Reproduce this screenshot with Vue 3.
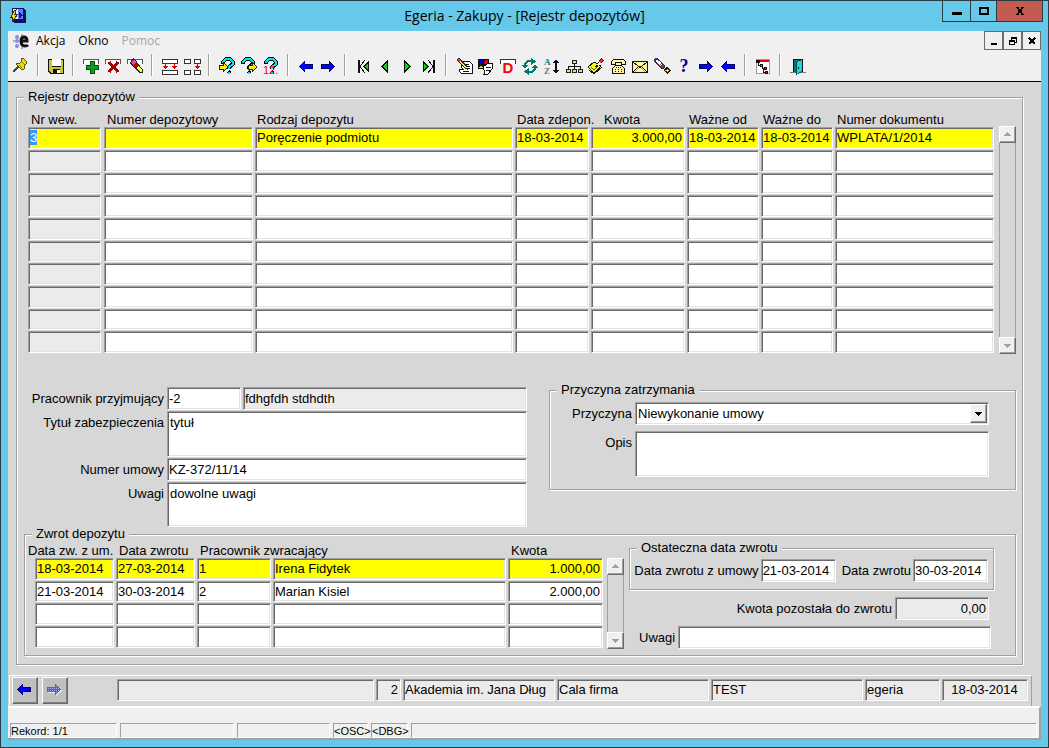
<script setup>
import { ref, onMounted } from 'vue'

const qMark = (x) =>
  `<g transform="translate(${x} 0)" fill="none" stroke-linejoin="round"><path d="M1 7V5L4 2H8L11 5V7L7 10V12" stroke="#000" stroke-width="4"/><path d="M7 13L9 15L7 18L5 15Z" fill="#000"/><path d="M1 6V5L4 2H8L11 5V7L7 10V12" stroke="#00e5f0" stroke-width="2"/><path d="M6 15H8V17H6Z" fill="#00e5f0"/></g>`
const flag = '<path d="M1.500 6.500V2.500H16.500V6.500" fill="#fff" stroke="#555"/>'
const arrowLeft = '<path d="M2 9.500L8 3V7H16V12H8V16Z" fill="#000060"/><path d="M3 9.500L8 5V8H15V11H8V14Z" fill="#0000ff"/>'
const arrowRight = '<path d="M16 9.500L10 3V7H2V12H10V16Z" fill="#000060"/><path d="M15 9.500L10 5V8H3V11H10V14Z" fill="#0000ff"/>'

const art = {
  pin: '<path d="M1 15L7 9" stroke="#444" stroke-width="2"/><path d="M9 2L11 1L15 5L14 7L12 9V12L10 13L4 7L5 6H8L10 4Z" fill="#e3dc1c" stroke="#5c5800"/><path d="M10 5L13 8M7 8L10 11" stroke="#8c8600"/>',
  save: '<path d="M1 2H17V17H3L1 15Z" fill="#111"/><path d="M2 3H5V10H14V3H16V16H13V12H6V16H4L2 14Z" fill="#c9c432"/><rect x="5" y="2" width="9" height="7" fill="#fff"/><rect x="10" y="13" width="3" height="3" fill="#fff"/>',
  add: flag + '<path d="M8 4H12V8H16V12H12V16H8V12H4V8H8Z" fill="#0a9d1c" stroke="#064d0c" stroke-width="1"/>',
  remove: flag + '<path d="M5 5L14 15M14 5L5 15" stroke="#a30000" stroke-width="3" fill="none"/>',
  erase: flag + '<path d="M5 3L8 1L17 13V16H14L4 7Z" fill="#222"/><path d="M6 4L8 3L10 5L7 8L5 6Z" fill="#f040b0"/><path d="M7 8L10 5L12 8L9 11Z" fill="#c00000"/><path d="M10 11L13 9L16 13V15H14Z" fill="#ffff30"/>',
  rows: '<path d="M1.500 2.500H16.500V6.500H1.500ZM1.500 13.500H16.500V17H1.500Z" fill="#fff" stroke="#333"/><path d="M4.500 6V10M13.500 6V10" stroke="#e00000"/><path d="M2 9H7L4.500 12ZM11 9H16L13.500 12Z" fill="#e00000"/>',
  cells: '<path d="M1.500 2.500H7.500V6.500H1.500ZM11.500 2.500H17V6.500H11.500ZM1.500 13.500H7.500V17H1.500ZM11.500 13.500H17V17H11.500Z" fill="#fff" stroke="#333"/><path d="M14.500 6V10" stroke="#e00000"/><path d="M12 9H17L14.500 12Z" fill="#e00000"/>',
  queryIn: qMark(4) + '<path d="M1 8H5V5L10 10L5 15V12H1Z" fill="#ffef00" stroke="#222"/>',
  queryOut: qMark(2) + '<path d="M8 8H12V5L17 10L12 15V12H8Z" fill="#ffef00" stroke="#222"/>',
  queryCount: qMark(3) + '<text x="1" y="17" font-family="Liberation Sans" font-size="11" fill="#ff0000">12.</text>',
  left: arrowLeft,
  right: arrowRight,
  first: '<path d="M4 3H6V16H4Z" fill="#111"/><path d="M11 3L6 9.500L11 16" stroke="#111" fill="none"/><path d="M15 3V16L9 9.500Z" fill="#111"/><path d="M14 6V13L11 9.500Z" fill="#00e000"/>',
  prev: '<path d="M12 3V16L5 9.500Z" fill="#111"/><path d="M11 6V13L7 9.500Z" fill="#00e000"/>',
  next: '<path d="M6 3V16L13 9.500Z" fill="#111"/><path d="M7 6V13L11 9.500Z" fill="#00e000"/>',
  last: '<path d="M13 3H15V16H13Z" fill="#111"/><path d="M8 3L13 9.500L8 16" stroke="#111" fill="none"/><path d="M3 3V16L9 9.500Z" fill="#111"/><path d="M4 6V13L7 9.500Z" fill="#00e000"/>',
  edit: '<path d="M6 4H14L17 7V16H6L4 14V12H8L6 10Z" fill="#fff" stroke="#111"/><path d="M10 7.500H14M12 9.500H15M12 11.500H15M8 14.500H14" stroke="#111"/><path d="M1 3L4 1L12 9L13 13L10 12Z" fill="#222"/><path d="M4 5L6 4L12 11H10Z" fill="#ffe92c"/><path d="M2 3L4 2L6 4L4 5Z" fill="#e0308c"/>',
  shapes: '<rect x="1" y="2" width="11" height="10" fill="#111"/><rect x="2" y="3" width="4" height="4" fill="#0000d8"/><circle cx="9" cy="5" r="2" fill="#e80000"/><path d="M2 11L4 8L6 11Z" fill="#e8d400"/><path d="M7 9L12 6H16L15 12L11 17H7L8 14L6 12Z" fill="#fff" stroke="#111"/><path d="M9 10.500H14M9 13.500H13" stroke="#111"/>',
  document: '<path d="M1.500 7V2.500H16.500V7" fill="#fff" stroke="#333"/><text x="9" y="16" font-family="Liberation Sans" font-weight="bold" font-size="15" fill="#ff0000" text-anchor="middle">D</text>',
  refresh: '<path d="M4 9V7L7 4H11M14 9V12L11 15H7" stroke="#007a6c" stroke-width="2" fill="none"/><path d="M10 1L15 4.500L10 8ZM8 18L3 14.500L8 11Z" fill="#007a6c"/><path d="M1 8H7L4 12ZM11 11H17L14 7Z" fill="#007a6c"/>',
  sort: '<text x="1" y="8" font-family="Liberation Serif" font-weight="bold" font-size="9" fill="#008080">A</text><text x="1" y="17" font-family="Liberation Serif" font-weight="bold" font-size="9" fill="#777">Z</text><path d="M13 4V15" stroke="#111" stroke-width="2"/><path d="M10 6L13 2L16 6ZM10 13L13 17L16 13Z" fill="#111"/>',
  hierarchy: '<path d="M9.500 6V12M3.500 12V9.500H15.500V12" stroke="#111" fill="none"/><path d="M7.500 3.500H11.500V6.500H7.500ZM1.500 12.500H5.500V15.500H1.500ZM7.500 12.500H11.500V15.500H7.500ZM13.500 12.500H17V15.500H13.500Z" fill="#e4dc80" stroke="#222"/>',
  approve: '<path d="M1 10L7 5L14 9L7 16Z" fill="#ffef2c" stroke="#111"/><path d="M2 13L7 17L15 10" stroke="#111" fill="none"/><path d="M4 10L7 13L11 9" stroke="#0a8a10" stroke-width="1" fill="none"/><path d="M8 10L14 1L17 3L10 11Z" fill="#222"/><path d="M10 8L12 5L14 6L11 9Z" fill="#fff"/><path d="M12 5L14 2L16 3L14 6Z" fill="#e03030"/>',
  phone: '<path d="M2.500 7.500V4.500L4.500 2.500H14.500L16.500 4.500V7.500H12.500V5.500H6.500V7.500Z" fill="#fff59a" stroke="#111"/><path d="M6.500 8.500H12.500L15.500 11.500V16.500H3.500V11.500Z" fill="#fff59a" stroke="#111"/><path d="M7 10.500H8M9 10.500H10M11 10.500H12M6 12.500H7M9 12.500H10M12 12.500H13M6 14.500H7M9 14.500H10M12 14.500H13" stroke="#111"/>',
  mail: '<rect x="1.500" y="4.500" width="15" height="11" fill="#fff6a0" stroke="#111"/><path d="M2 5L9 10.500L16 5M2 15L7 10M16 15L11 10" stroke="#111" fill="none"/><path d="M4 15L8 11M14 15L10 11" stroke="#d0b828"/>',
  torch: '<path d="M1 3L4 1L12 8V11L9 12L2 6Z" fill="#333"/><path d="M3 3L6 4L9 7L7 9L3 5Z" fill="#fff"/><path d="M8 9L10 7L11 9L9 11Z" fill="#2850d0"/><path d="M6 9L9 6" stroke="#e00000"/><path d="M1 3L4 1" stroke="#1030d0"/><path d="M14 10L18 13L14 17L10 13Z" fill="#111"/><path d="M14 12V15M12 13.500H16" stroke="#ffef2c"/>',
  help: '<text x="9" y="15" font-family="Liberation Serif" font-weight="bold" font-size="18" fill="#000090" text-anchor="middle">?</text>',
  tree: '<rect x="2.500" y="2.500" width="13" height="14" fill="#fff" stroke="#999"/><rect x="6" y="3" width="9" height="2" fill="#f00000"/><path d="M4.500 5V8.500H8M8.500 8V11.500H12M9.500 11V15.500H12" stroke="#111" fill="none"/><path d="M2 3H6V6H2ZM6 7H9V10H6ZM10 10H13V13H10ZM11 14H14V17H11Z" fill="#111"/><rect x="11" y="11" width="1" height="1" fill="#00c000"/><rect x="7" y="8" width="1" height="1" fill="#e8d400"/><rect x="12" y="15" width="1" height="1" fill="#e00000"/>',
  door: '<path d="M1 15.500H17" stroke="#777"/><path d="M4.500 15V2.500H13.500V15" fill="#0a6f78" stroke="#111"/><path d="M7 5L13 2V15L7 18Z" fill="#054a50"/><path d="M8 5L13 3V14L8 17Z" fill="#18d8e0"/><rect x="9" y="10" width="1" height="2" fill="#111"/>'
}

const toolGroups = [
  [['pin', 'Przypnij']],
  [['save', 'Zapisz']],
  [['add', 'Dodaj rekord'], ['remove', 'Usuń rekord'], ['erase', 'Wyczyść rekord']],
  [['rows', 'Powiel rekord'], ['cells', 'Powiel pole']],
  [['queryIn', 'Wprowadź zapytanie'], ['queryOut', 'Wykonaj zapytanie'], ['queryCount', 'Policz rekordy']],
  [['left', 'Poprzedni blok'], ['right', 'Następny blok']],
  [['first', 'Pierwszy rekord'], ['prev', 'Poprzedni rekord'], ['next', 'Następny rekord'], ['last', 'Ostatni rekord']],
  [
    ['edit', 'Edytuj'], ['shapes', 'Lista wartości'], ['document', 'Dokument'], ['refresh', 'Odśwież'],
    ['sort', 'Sortuj'], ['hierarchy', 'Struktura'], ['approve', 'Zatwierdź'], ['phone', 'Telefon'],
    ['mail', 'Poczta'], ['torch', 'Szukaj'], ['help', 'Pomoc'], ['right', 'Dalej'], ['left', 'Wstecz']
  ],
  [['tree', 'Drzewo']],
  [['door', 'Wyjście']]
]

const depositColumns = [
  { title: 'Nr wew.', cls: 'c-no' },
  { title: 'Numer depozytowy', cls: 'c-number' },
  { title: 'Rodzaj depozytu', cls: 'c-kind' },
  { title: 'Data zdepon.', cls: 'c-date' },
  { title: 'Kwota', cls: 'c-amount' },
  { title: 'Ważne od', cls: 'c-valid' },
  { title: 'Ważne do', cls: 'c-valid' },
  { title: 'Numer dokumentu', cls: 'c-doc' }
]
const blank = (n) => Array(n).fill('')
const deposits = ref([
  ['3', '', 'Poręczenie podmiotu', '18-03-2014', '3.000,00', '18-03-2014', '18-03-2014', 'WPLATA/1/2014'],
  ...Array.from({ length: 9 }, () => blank(8))
])

const returnColumns = [
  { title: 'Data zw. z um.', cls: 'r-due' },
  { title: 'Data zwrotu', cls: 'r-date' },
  { title: 'Pracownik zwracający', cls: 'r-id' },
  { title: '', cls: 'r-name' },
  { title: 'Kwota', cls: 'r-amount' }
]
const returns = ref([
  ['18-03-2014', '27-03-2014', '1', 'Irena Fidytek', '1.000,00'],
  ['21-03-2014', '30-03-2014', '2', 'Marian Kisiel', '2.000,00'],
  blank(5),
  blank(5)
])

const context = [
  { label: 'Komunikat', value: '', cls: 's-message' },
  { label: 'Numer jednostki', value: '2', cls: 's-unit' },
  { label: 'Jednostka', value: 'Akademia im. Jana Dług', cls: 's-wide' },
  { label: 'Firma', value: 'Cala firma', cls: 's-wide' },
  { label: 'Baza', value: 'TEST', cls: 's-wide' },
  { label: 'Użytkownik', value: 'egeria', cls: 's-user' },
  { label: 'Data', value: '18-03-2014', cls: 's-date' }
]

const depositTable = ref(null)
onMounted(() => {
  const current = depositTable.value.querySelector('tbody input')
  current.focus({ preventScroll: true })
  current.select()
})
</script>

<template>
  <div class="window">
    <header class="titlebar">
      <svg class="app-icon" viewBox="0 0 16 16" aria-hidden="true">
        <path d="M2 1H13L16 4V16H4L2 14Z" fill="#10105c" />
        <path d="M3 2H13V12H3Z" fill="#e4eaff" />
        <path d="M8 2H13V12H8Z" fill="#5c84f8" />
        <path d="M9 4L13 9H11V11H9Z" fill="#1010b0" />
        <path d="M4 4L6 3L5 7H8L2 15L3 10H1Z" fill="#ffe100" stroke="#3a3000" />
      </svg>
      <h1>Egeria - Zakupy - [Rejestr depozytów]</h1>
      <div class="window-buttons">
        <button type="button" class="w-min" aria-label="Minimalizuj">
          <svg viewBox="0 0 12 12"><path d="M1 7H11V10H1Z" /></svg>
        </button>
        <button type="button" class="w-max" aria-label="Maksymalizuj">
          <svg viewBox="0 0 12 12"><path d="M2 3H10V9H2Z" fill="none" stroke="#000" stroke-width="2" /></svg>
        </button>
        <button type="button" class="w-close" aria-label="Zamknij">
          <svg viewBox="0 0 12 12"><path d="M3 2L9 10M9 2L3 10" fill="none" stroke="#000" stroke-width="2" /></svg>
        </button>
      </div>
    </header>

    <main class="client">
      <nav class="menubar">
        <svg class="menu-icon" viewBox="0 0 18 16" aria-hidden="true">
          <g fill="#8b8bd8">
            <circle cx="2" cy="8" r="1" /><circle cx="5" cy="4" r="2" /><circle cx="5" cy="8" r="2" />
            <circle cx="5" cy="13" r="2" /><circle cx="10" cy="2" r="1" /><circle cx="10" cy="15" r="1" />
          </g>
          <path d="M10 8H15Q15 4 12 4Q9 4 9 8Q9 13 13 13Q15 13 16 12" fill="none" stroke="#111" stroke-width="3" />
        </svg>
        <button type="button">Akcja</button>
        <button type="button">Okno</button>
        <button type="button" disabled>Pomoc</button>
        <div class="mdi-buttons">
          <button type="button" aria-label="Minimalizuj dokument">
            <svg viewBox="0 0 10 10"><path d="M2 7H8V9H2Z" /></svg>
          </button>
          <button type="button" aria-label="Przywróć dokument">
            <svg viewBox="0 0 10 10">
              <path d="M3 1H9V3H3ZM1 4H7V6H1Z" />
              <path d="M3.500 4V2M8.500 2V6.500H7M1.500 5V8.500H6.500V5" fill="none" stroke="#000" />
            </svg>
          </button>
          <button type="button" aria-label="Zamknij dokument">
            <svg viewBox="0 0 10 10"><path d="M2 2L8 8M8 2L2 8" fill="none" stroke="#000" stroke-width="2" /></svg>
          </button>
        </div>
      </nav>

      <div class="toolbar" role="toolbar" aria-label="Pasek narzędzi">
        <div v-for="(group, g) in toolGroups" :key="g" class="tool-group">
          <button v-for="[icon, label] in group" :key="label" type="button" :aria-label="label">
            <svg viewBox="0 0 18 18" v-html="art[icon]" />
          </button>
        </div>
      </div>

      <form class="workspace" @submit.prevent>
        <fieldset class="register">
          <legend>Rejestr depozytów</legend>

          <div class="deposits">
            <table ref="depositTable">
              <thead>
                <tr>
                  <th v-for="col in depositColumns" :key="col.title" :class="col.cls" scope="col">{{ col.title }}</th>
                </tr>
              </thead>
              <tbody>
                <tr v-for="(row, r) in deposits" :key="r" :class="{ current: r === 0 }">
                  <td v-for="(col, c) in depositColumns" :key="c" :class="col.cls">
                    <input v-model="row[c]" class="field" type="text" :aria-label="col.title" />
                  </td>
                </tr>
              </tbody>
            </table>
            <div class="scroll">
              <button type="button" aria-label="W górę"><svg viewBox="0 0 9 9"><path d="M1 6H8L4.500 2Z" /></svg></button>
              <button type="button" aria-label="W dół"><svg viewBox="0 0 9 9"><path d="M1 3H8L4.500 7Z" /></svg></button>
            </div>
          </div>

          <div class="details">
            <div class="detail-form">
              <label for="clerk">Pracownik przyjmujący</label>
              <div class="pair">
                <input id="clerk" class="field clerk-id" type="text" value="-2" />
                <input class="field readonly" type="text" value="fdhgfdh stdhdth" readonly aria-label="Nazwa pracownika" />
              </div>
              <label for="title">Tytuł zabezpieczenia</label>
              <textarea id="title" class="field area-title">tytuł</textarea>
              <label for="contract">Numer umowy</label>
              <input id="contract" class="field" type="text" value="KZ-372/11/14" />
              <label for="notes">Uwagi</label>
              <textarea id="notes" class="field area">dowolne uwagi</textarea>
            </div>

            <fieldset class="reason">
              <legend>Przyczyna zatrzymania</legend>
              <label for="cause">Przyczyna</label>
              <div class="combo">
                <select id="cause" class="field">
                  <option>Niewykonanie umowy</option>
                </select>
                <span class="combo-arrow" aria-hidden="true"><svg viewBox="0 0 9 9"><path d="M1 3H8L4.500 7Z" /></svg></span>
              </div>
              <label for="description">Opis</label>
              <textarea id="description" class="field area-title"></textarea>
            </fieldset>
          </div>

          <fieldset class="refund">
            <legend>Zwrot depozytu</legend>
            <div class="refund-body">
              <table>
                <thead>
                  <tr>
                    <th v-for="col in returnColumns" :key="col.cls" :class="col.cls" scope="col">{{ col.title }}</th>
                  </tr>
                </thead>
                <tbody>
                  <tr v-for="(row, r) in returns" :key="r" :class="{ current: r === 0 }">
                    <td v-for="(col, c) in returnColumns" :key="c" :class="col.cls">
                      <input v-model="row[c]" class="field" type="text" :aria-label="col.title || 'Nazwisko'" />
                    </td>
                  </tr>
                </tbody>
              </table>
              <div class="scroll">
                <button type="button" aria-label="W górę"><svg viewBox="0 0 9 9"><path d="M1 6H8L4.500 2Z" /></svg></button>
                <button type="button" aria-label="W dół"><svg viewBox="0 0 9 9"><path d="M1 3H8L4.500 7Z" /></svg></button>
              </div>
              <div class="summary">
                <fieldset class="final">
                  <legend>Ostateczna data zwrotu</legend>
                  <div class="final-row">
                    <label for="due">Data zwrotu z umowy</label>
                    <input id="due" class="field" type="text" value="21-03-2014" />
                    <label for="returned" class="second">Data zwrotu</label>
                    <input id="returned" class="field" type="text" value="30-03-2014" />
                  </div>
                </fieldset>
                <div class="line left-over">
                  <label for="rest">Kwota pozostała do zwrotu</label>
                  <input id="rest" class="field readonly" type="text" value="0,00" readonly />
                </div>
                <div class="line remarks">
                  <label for="remarks">Uwagi</label>
                  <input id="remarks" class="field" type="text" />
                </div>
              </div>
            </div>
          </fieldset>
        </fieldset>

        <div class="context">
          <button type="button" aria-label="Poprzedni formularz">
            <svg viewBox="0 0 18 18" v-html="art.left" />
          </button>
          <button type="button" class="forward" aria-label="Następny formularz">
            <svg viewBox="0 0 18 18">
              <path d="M17 10.500L11 4V8H3V13H11V17Z" fill="#e8e8f4" />
              <path d="M16 9.500L10 3V7H2V12H10V16Z" fill="#5858e6" />
              <path d="M3 8.500H14M3 10.500H14M11 6.500H13M11 12.500H13" stroke="#a8a8e8" stroke-dasharray="1 1" />
            </svg>
          </button>
          <div class="context-fields">
            <input
              v-for="item in context" :key="item.label" class="field readonly" :class="item.cls"
              type="text" :value="item.value" readonly :aria-label="item.label"
            />
          </div>
        </div>
      </form>

      <footer class="status">
        <span class="st-record">Rekord: 1/1</span>
        <span class="st-a"></span>
        <span class="st-b"></span>
        <span class="st-osc">&lt;OSC&gt;</span>
        <span class="st-dbg">&lt;DBG&gt;</span>
        <span class="st-rest"></span>
      </footer>
    </main>
  </div>
</template>

<style>
body {
  background: #66c9ea;
}
</style>

<style scoped>
* {
  box-sizing: border-box;
}
.window {
  display: flex;
  flex-direction: column;
  min-height: 100vh;
  border: 1px solid #2d3b44;
  padding: 0 7px 7px;
  background: #66c9ea;
  color: #000;
  font: 13px/15px "Liberation Sans", Arial, sans-serif;
}
button,
input,
select,
textarea {
  font: inherit;
  color: inherit;
  margin: 0;
  border-radius: 0;
  outline: none;
}
button {
  display: flex;
  align-items: center;
  justify-content: center;
  padding: 0;
  border: 0;
  background: none;
}
svg {
  display: block;
  shape-rendering: crispEdges;
}

/* title bar */
.titlebar {
  display: grid;
  grid-template-columns: 99px 1fr 99px;
  height: 30px;
  align-items: start;
}
.app-icon {
  width: 16px;
  height: 16px;
  margin: 6px 0 0 2px;
}
h1 {
  margin: 0;
  font: 14px/30px "Open Sans", "Noto Sans", sans-serif;
  text-align: center;
  white-space: nowrap;
}
.window-buttons {
  display: flex;
  height: 21px;
  margin-right: -2px;
  border: 1px solid #2d3b44;
  border-top: 0;
}
.window-buttons button {
  height: 20px;
}
.window-buttons svg {
  width: 12px;
  height: 12px;
}
.w-min {
  flex: 28;
}
.w-max {
  flex: 26;
  border-left: 1px solid #2d3b44;
}
.w-close {
  flex: 46;
  border-left: 1px solid #2d3b44;
  background: #c45b51;
}

/* menu */
.client {
  display: flex;
  flex: 1;
  flex-direction: column;
  background: #d7d7d7;
}
.menubar {
  display: flex;
  height: 21px;
  padding-left: 4px;
  background: #f0f0f0;
  font: 12px/19px "Open Sans", "Noto Sans", sans-serif;
}
.menu-icon {
  width: 18px;
  height: 16px;
  margin: 2px 6px 0 0;
  shape-rendering: auto;
}
.menubar > button {
  height: 19px;
  margin-right: 13px;
}
.menubar > button:disabled {
  color: #a6a6a6;
}
.mdi-buttons {
  display: flex;
  height: 19px;
  margin-left: auto;
}
.mdi-buttons button {
  width: 19px;
  border: 1px solid #6d6d6d;
}
.mdi-buttons svg {
  width: 10px;
  height: 10px;
}

/* toolbar */
.toolbar {
  display: flex;
  height: 30px;
  padding: 2px 0 0 2px;
  border-bottom: 1px solid #000;
  background: #f0f0f0;
}
.tool-group {
  display: flex;
}
.tool-group + .tool-group {
  margin-left: 5px;
  padding-left: 7px;
  border-left: 1px solid #a0a0a0;
  box-shadow: inset 1px 0 #fff;
  height: 22px;
}
.tool-group button {
  width: 22px;
  height: 24px;
}
.tool-group svg {
  width: 18px;
  height: 18px;
}

/* shared form parts */
fieldset {
  min-width: 0;
  margin: 0;
  padding: 0 0 0 7px;
  border: 1px solid #a0a0a0;
  box-shadow: 1px 1px #fff, inset 1px 1px #fff;
}
legend {
  height: 14px;
  padding: 0 4px;
  background: #d7d7d7;
  line-height: 14px;
}
label {
  white-space: nowrap;
}
.field {
  display: block;
  width: 100%;
  min-width: 0;
  height: 23px;
  padding: 0 2px 1px 1px;
  border: 1px solid;
  border-color: #a0a0a0 #fff #fff #a0a0a0;
  box-shadow: inset 1px 1px #696969, inset -1px -1px #e3e3e3;
  background: #fff;
}
textarea.field {
  padding: 3px 2px;
  resize: none;
  overflow: hidden;
}
.field.readonly {
  background: #ebebeb;
}
.field::selection {
  background: #3399ff;
  color: #fff;
}

/* tables */
table {
  flex: 1;
  width: 100%;
  min-width: 0;
  table-layout: fixed;
  border-collapse: collapse;
}
th {
  padding: 0 0 0 3px;
  font-weight: normal;
  text-align: left;
  vertical-align: bottom;
  white-space: nowrap;
}
td {
  height: 23px;
  padding: 0 2px 0 0;
  vertical-align: top;
}
td .field {
  height: 22px;
}
.current .field {
  background: #ff0;
}
.scroll {
  display: flex;
  flex: 0 0 17px;
  flex-direction: column;
  justify-content: space-between;
  min-width: 0;
  border: 1px solid #a0a0a0;
  border-width: 0 1px;
}
.scroll button {
  width: 17px;
  height: 17px;
  margin-left: -1px;
}
.scroll button,
.combo-arrow {
  border: 1px solid;
  border-color: #fff #696969 #696969 #fff;
  box-shadow: inset -1px -1px #a0a0a0;
  background: #f0f0f0;
}
.scroll svg,
.combo-arrow svg {
  width: 9px;
  height: 9px;
}
.scroll svg {
  fill: #a0a0a0;
}

/* deposit register */
.workspace {
  display: flex;
  flex: 1;
  flex-direction: column;
}
.register {
  margin: 8px 18px 0 8px;
  padding: 0 6px 8px 7px;
}
.deposits {
  display: flex;
  gap: 3px;
  padding-left: 4px;
}
.deposits th {
  height: 23px;
  padding-left: 2px;
}
.deposits tr:nth-child(3n) td {
  height: 22px;
}
.deposits tr:nth-child(3n) .field {
  height: 21px;
}
.deposits .scroll {
  margin-top: 22px;
}
.c-no {
  width: 76px;
}
.deposits th.c-no,
.deposits th.c-number {
  padding-left: 3px;
}
td.c-no {
  padding-right: 3px;
}
.c-no .field {
  background: #ebebeb;
}
.current .c-no .field {
  background: #ff0;
}
.c-number {
  width: 151px;
}
.c-date {
  width: 76px;
}
.c-amount {
  width: 96px;
}
.deposits th.c-amount {
  padding-left: 13px;
}
.c-amount .field,
.r-amount .field,
.left-over .field,
.s-unit {
  text-align: right;
}
.c-valid {
  width: 74px;
}
.c-doc {
  width: 161px;
}

/* detail section */
.details {
  display: grid;
  grid-template-columns: minmax(0, 503fr) minmax(0, 467fr);
  gap: 22px;
  align-items: start;
  margin-top: 29px;
}
.detail-form {
  display: grid;
  grid-template-columns: 140px minmax(0, 1fr);
  gap: 1px 3px;
  margin-top: 4px;
}
.detail-form label,
.reason label {
  padding-top: 4px;
  text-align: right;
}
.pair {
  display: flex;
  gap: 2px;
}
.clerk-id {
  flex: 0 0 74px;
}
.area-title {
  height: 46px;
}
.area {
  height: 45px;
}
.reason {
  display: grid;
  grid-template-columns: 75px minmax(0, 1fr);
  gap: 6px 3px;
  padding: 5px 26px 12px 7px;
}
.combo {
  position: relative;
}
.combo select {
  appearance: none;
  padding-left: 2px;
}
.combo-arrow {
  position: absolute;
  top: 2px;
  right: 2px;
  display: flex;
  align-items: center;
  justify-content: center;
  width: 17px;
  height: 19px;
  pointer-events: none;
}

/* refunds */
.refund {
  padding: 0 21px 6px 3px;
}
.refund > legend {
  margin-left: 4px;
}
.refund-body {
  display: flex;
}
.refund th {
  height: 17px;
}
.refund th.r-due {
  padding-left: 0;
}
.refund tr:nth-child(2) td {
  height: 22px;
}
.refund tr:nth-child(2) .field {
  height: 21px;
}
.refund .scroll {
  margin: 17px 5px 0 4px;
}
.r-due {
  width: 88px;
}
td.r-due {
  padding-left: 7px;
}
.r-date {
  width: 81px;
}
.r-id {
  width: 76px;
}
.r-amount {
  width: 95px;
}
td.r-amount {
  padding-right: 0;
}
.summary {
  flex: 0 0 365px;
  min-width: 0;
}
.final {
  padding: 4px 5px 7px 4px;
}
.final > legend {
  margin-left: 3px;
}
.final-row,
.line {
  display: flex;
  align-items: center;
  justify-content: flex-end;
  gap: 2px;
}
.final-row .field {
  flex: 0 0 75px;
}
.final-row .second {
  margin-left: 4px;
}
.line {
  gap: 3px;
}
.left-over {
  margin: 7px 5px 6px 0;
}
.left-over .field {
  flex: 0 0 94px;
}
.remarks {
  margin: 0 3px 0 10px;
}
.remarks .field {
  flex: 1;
}

/* bottom context bar */
.context {
  display: flex;
  flex: 1;
  align-items: flex-start;
  min-height: 31px;
  margin: 10px 9px 0 1px;
  padding: 1px 3px 0 2px;
  border: 1px solid;
  border-color: #fff #a0a0a0 transparent #fff;
  border-bottom: 0;
}
.context button {
  width: 26px;
  height: 27px;
  margin-right: 4px;
  padding: 0 3px 3px 0;
  border: 1px solid;
  border-color: #fff #696969 #696969 #fff;
  box-shadow: inset -1px -1px #808080;
  background: #c0c0c0;
}
.context button svg {
  flex: none;
  width: 18px;
  height: 18px;
}
.context-fields {
  display: flex;
  flex: 1;
  gap: 2px;
  margin: 2px 0 0 45px;
}
.context-fields .field {
  height: 22px;
}
.s-message {
  flex: 1;
}
.s-unit {
  flex: 0 0 25px;
}
.s-wide {
  flex: 0 0 152px;
}
.s-user {
  flex: 0 0 75px;
}
.s-date {
  flex: 0 0 86px;
  text-align: center;
}

/* status bar */
.status {
  display: flex;
  gap: 3px;
  padding: 15px 2px 0;
  border: 2px solid;
  border-color: #fff #a0a0a0 #a0a0a0 transparent;
  border-left-width: 0;
  background: #f0f0f0;
  font-size: 11px;
  line-height: 14px;
}
.status span {
  height: 15px;
  border: 1px solid;
  border-color: #a0a0a0 #fff #fff #a0a0a0;
  white-space: nowrap;
}
.st-record {
  width: 107px;
}
.st-a {
  width: 114px;
}
.st-b {
  width: 93px;
}
.st-osc {
  width: 35px;
}
.st-dbg {
  width: 37px;
}
.st-rest {
  flex: 1;
}
</style>
